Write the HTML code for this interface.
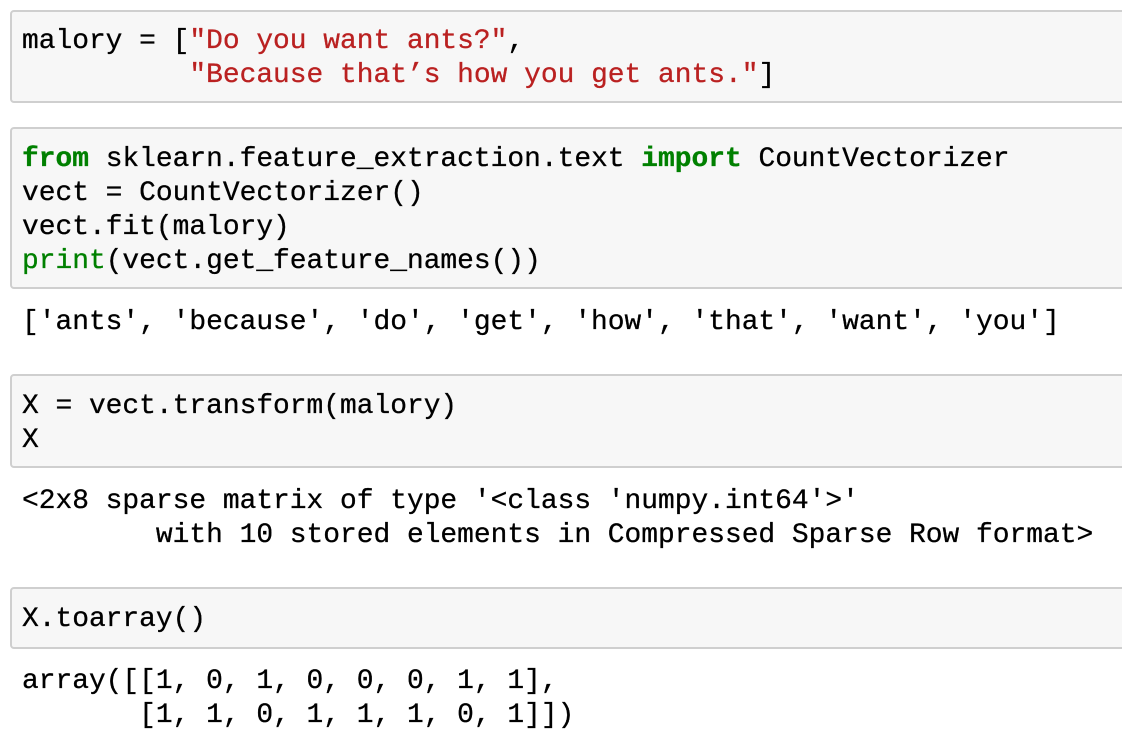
<!DOCTYPE html>
<html><head><style>
body{margin:0;width:1122px;height:748px;background:#fff;overflow:hidden;position:relative;font-family:"Liberation Mono",monospace;font-size:27.9px;color:#000;-webkit-text-stroke:0.3px}
.box{position:absolute;left:10px;width:1130px;background:#f7f7f7;border:2px solid #cfcfcf;border-radius:4px;box-sizing:border-box;-webkit-text-stroke:0}
pre{position:absolute;left:22px;margin:0;font:inherit;line-height:34px;white-space:pre}
.s{color:#ba2121}.k{color:#008000;font-weight:bold}.b{color:#008000}
</style></head><body>
<div class="box" style="top:10px;height:93px"></div>
<pre style="top:25px">malory = [<span class="s">"Do you want ants?"</span>,
          <span class="s">"Because that’s how you get ants."</span>]</pre>
<div class="box" style="top:127px;height:162px"></div>
<pre style="top:143px"><span class="k">from</span> sklearn.feature_extraction.text <span class="k">import</span> CountVectorizer
vect = CountVectorizer()
vect.fit(malory)
<span class="b">print</span>(vect.get_feature_names())</pre>
<pre style="top:306px">['ants', 'because', 'do', 'get', 'how', 'that', 'want', 'you']</pre>
<div class="box" style="top:374px;height:94px"></div>
<pre style="top:390px">X = vect.transform(malory)
X</pre>
<pre style="top:485px">&lt;2x8 sparse matrix of type '&lt;class 'numpy.int64'&gt;'
        with 10 stored elements in Compressed Sparse Row format&gt;</pre>
<div class="box" style="top:587px;height:62px"></div>
<pre style="top:603px">X.toarray()</pre>
<pre style="top:665px">array([[1, 0, 1, 0, 0, 0, 1, 1],
       [1, 1, 0, 1, 1, 1, 0, 1]])</pre>
</body></html>
